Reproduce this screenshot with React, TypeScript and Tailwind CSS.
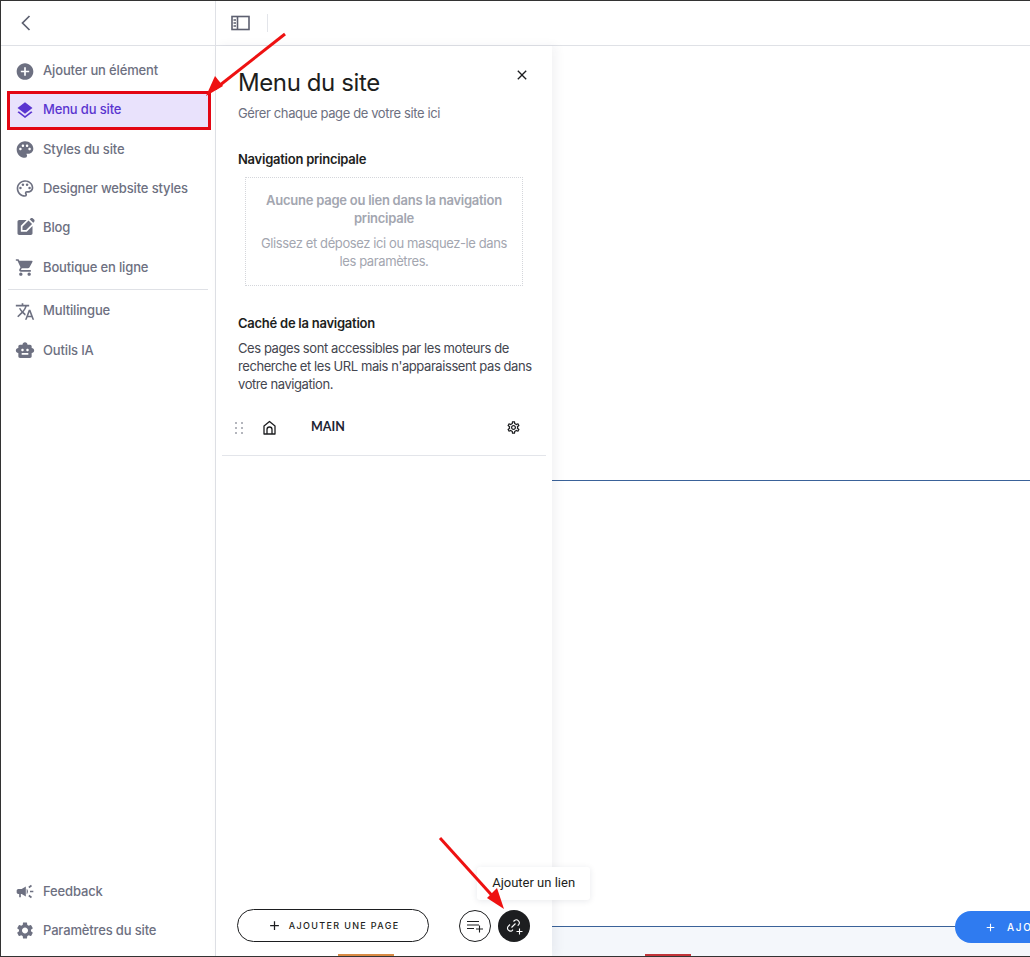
import React from "react";
import { MdAddCircle, MdLayers, MdPalette, MdOutlinePalette, MdEditSquare, MdShoppingCart, MdTranslate, MdSmartToy, MdCampaign, MdSettings, MdClose, MdAdd, MdOutlineSettings } from "react-icons/md";

const font = "font-['Inter','Liberation_Sans',sans-serif]";

function NavItem({ icon, label, active }: { icon: React.ReactNode; label: string; active?: boolean }) {
  return (
    <div className={`flex items-center gap-[8px] h-[33px] pl-[14px] text-[13px] font-medium tracking-[-0.15px] ${active ? "text-[#5a35d0]" : "text-[#6d7081]"}`}>
      <span className="w-[20px] flex justify-center text-[21px]">{icon}</span>
      <span>{label}</span>
    </div>
  );
}

function Arrows() {
  return (
    <svg className="absolute inset-0 z-20 pointer-events-none" width="1030" height="957" fill="none">
      <path d="M284 33 L214 88" stroke="#ee1111" strokeWidth="3" />
      <path d="M205 95 L222 85 L214 75 Z" fill="#ee1111" />
      <path d="M439 837 L496 900" stroke="#ee1111" strokeWidth="3" />
      <path d="M503 908 L486 897 L496 887 Z" fill="#ee1111" />
    </svg>
  );
}

export default function App() {
  return (
    <div className={`relative w-[1030px] h-[957px] overflow-hidden bg-white border-t border-l border-b border-[#333] flex ${font}`}>
      <aside className="w-[215px] shrink-0 border-r border-[#dfe1e6] flex flex-col">
        <div className="h-[45px] shrink-0 border-b border-[#dfe1e6] flex items-center pl-[20px]">
          <svg width="10" height="16" viewBox="0 0 10 16" fill="none" stroke="#5d6070" strokeWidth="1.7">
            <path d="M8.500 1 L1.500 8 L8.500 15" />
          </svg>
        </div>
        <div className="flex flex-col pt-[5px]">
          <div className="h-[40px] flex items-center"><div className="w-full"><NavItem icon={<MdAddCircle />} label="Ajouter un élément" /></div></div>
          <div className="h-[39px] ml-[6px] w-[204px] border-[3px] border-[#e30613] bg-[#e9e2fc] flex items-center">
            <div className="-ml-[9px] -mt-[1px]"><NavItem active icon={<MdLayers />} label="Menu du site" /></div>
          </div>
          <div className="h-[39px] flex items-center"><NavItem icon={<MdPalette />} label="Styles du site" /></div>
          <div className="h-[39px] flex items-center"><NavItem icon={<MdOutlinePalette />} label="Designer website styles" /></div>
          <div className="h-[39px] flex items-center"><NavItem icon={<MdEditSquare />} label="Blog" /></div>
          <div className="h-[40px] flex items-center pt-[1px]"><NavItem icon={<MdShoppingCart />} label="Boutique en ligne" /></div>
          <div className="mx-[7px] mt-[2px] border-t border-[#dfe1e6]" />
          <div className="h-[41px] flex items-center pt-[1px]"><NavItem icon={<MdTranslate />} label="Multilingue" /></div>
          <div className="h-[39px] flex items-center"><NavItem icon={<MdSmartToy />} label="Outils IA" /></div>
        </div>
        <div className="mt-auto flex flex-col pb-[6px]">
          <div className="h-[39px] flex items-center"><NavItem icon={<MdCampaign />} label="Feedback" /></div>
          <div className="h-[39px] flex items-center"><NavItem icon={<MdSettings />} label="Paramètres du site" /></div>
        </div>
      </aside>

      <div className="flex-1 flex flex-col min-w-0">
        <header className="h-[45px] shrink-0 border-b border-[#dfe1e6] flex items-center pl-[15px]">
          <svg width="20" height="16" viewBox="0 0 20 16" fill="none" stroke="#5d6070" strokeWidth="1.6">
            <rect x="1" y="1.500" width="17" height="13" />
            <path d="M6.500 1.500v13M2.500 5h2.500M2.500 8h2.500M2.500 11h2.500" />
          </svg>
          <div className="ml-[16px] h-[18px] w-px bg-[#e3e5ea]" />
        </header>
        <div className="flex-1 flex min-h-0">
          <section className="relative z-10 w-[336px] shrink-0 bg-white shadow-[4px_0_10px_rgba(30,40,70,0.06)] flex flex-col px-[22px]">
            <div className="flex items-start justify-between pt-[22px]">
              <h1 className="text-[24px] leading-[30px] font-normal text-[#1d1e20] tracking-[-0.4px]">Menu du site</h1>
              <MdClose className="text-[16px] text-[#1d1e20] mt-[-1px]" />
            </div>
            <p className="mt-[5px] text-[13px] leading-[20px] text-[#6d7081] tracking-[-0.38px]">Gérer chaque page de votre site ici</p>
            <h2 className="mt-[26px] text-[13px] leading-[20px] font-semibold text-[#1d1e20] tracking-[-0.25px]">Navigation principale</h2>
            <div className="mt-[8px] ml-[7px] w-[278px] h-[109px] border border-dotted border-[#d4d6db] flex flex-col items-center pt-[13px] text-center px-[4px]">
              <p className="text-[13px] leading-[18px] font-semibold text-[#a3a6b0] tracking-[-0.25px] px-[10px]">Aucune page ou lien dans la navigation principale</p>
              <p className="mt-[7px] text-[13px] leading-[18px] text-[#a3a6b0] tracking-[-0.4px] whitespace-pre-line">{"Glissez et déposez ici ou masquez-le dans\nles paramètres."}</p>
            </div>
            <h2 className="mt-[27px] text-[13px] leading-[20px] font-semibold text-[#1d1e20] tracking-[-0.25px]">Caché de la navigation</h2>
            <p className="mt-[6px] text-[13px] leading-[18px] text-[#44464f] tracking-[-0.42px] w-[300px]">Ces pages sont accessibles par les moteurs de recherche et les URL mais n'apparaissent pas dans votre navigation.</p>
            <div className="mt-[9px] -mx-[16px] h-[54px] border-b border-[#e3e5ea] flex items-center pb-[2px]">
              <span className="ml-[13px] grid grid-cols-2 gap-x-[4px] gap-y-[3px]">
                {[0, 1, 2, 3, 4, 5].map((i) => <i key={i} className="block w-[2px] h-[2px] bg-[#b4b6bd]" />)}
              </span>
              <svg className="ml-[19px]" width="15" height="15" viewBox="0 0 15 15" fill="none" stroke="#1d1e20" strokeWidth="1.3">
                <path d="M2 14 V6 L7.500 1.500 L13 6 V14 Z" strokeLinejoin="round" />
                <path d="M5 14 V9.500 A2.500 2.500 0 0 1 10 9.500 V14" />
              </svg>
              <span className="ml-[34px] text-[12.500px] font-bold text-[#1d2433] font-['Lato',sans-serif]">MAIN</span>
              <MdOutlineSettings className="ml-auto mr-[25px] text-[15px] text-[#1d1e20]" />
            </div>
            <div className="mt-auto pb-[14px] flex items-center">
              <div className="-ml-[1px] w-[193px] h-[33px] rounded-full border border-[#1d1e20] flex items-center justify-center gap-[7px] text-[9px] font-medium tracking-[1.35px] text-[#1d1e20]">
                <MdAdd className="text-[15px]" />
                <span>AJOUTER UNE PAGE</span>
              </div>
              <div className="ml-[30px] w-[32px] h-[32px] rounded-full border border-[#1d1e20] flex items-center justify-center">
                <svg width="18" height="14" viewBox="0 0 18 14" fill="none" stroke="#1d1e20" strokeWidth="1.1">
                  <path d="M1 2.500h12M1 6h12M1 9.500h7M10 10h7M13.500 6.500v7" />
                </svg>
              </div>
              <div className="relative ml-[7px] w-[32px] h-[32px] rounded-full bg-[#1d1e20] flex items-center justify-center">
                <svg width="20" height="20" viewBox="0 0 20 20" fill="none" stroke="#fff" strokeWidth="1.1">
                  <path d="M7.500 11.500l4-4M6 8.500l-2 2a3 3 0 0 0 4 4.200l1-1M9.500 5.500l1-1a3 3 0 0 1 4.200 4.200l-1 1M12.500 15.500h6M15.500 12.500v6" />
                </svg>
                <div className="absolute left-[-21px] bottom-[42px] w-[113px] h-[33px] rounded-[3px] bg-white shadow-[0_1px_6px_rgba(30,40,70,0.1)] flex items-center justify-center text-[13px] text-[#1d1e20] font-['Roboto',sans-serif] whitespace-nowrap">
                  Ajouter un lien
                </div>
              </div>
            </div>
          </section>
          <main className="relative flex-1 flex flex-col">
            <div className="h-[435px] border-b border-[#3a6299]" />
            <div className="h-[446px] border-b border-[#3a6299]" />
            <div className="flex-1 bg-[#f4f7fb]" />
            <div className="absolute left-[403px] top-[865px] w-[120px] h-[32px] rounded-l-full bg-[#2f7bf0] flex items-center pl-[29px] text-white text-[10px] font-medium tracking-[1.7px]">
              <MdAdd className="text-[13px] mr-[10px] shrink-0" /><span>AJOU</span>
            </div>
          </main>
        </div>
      </div>
      <Arrows />
      <span className="absolute z-20 left-[337px] bottom-0 w-[56px] h-[2px] bg-[#d98a45]" />
      <span className="absolute z-20 left-[644px] bottom-0 w-[46px] h-[2px] bg-[#c2353a]" />
    </div>
  );
}
